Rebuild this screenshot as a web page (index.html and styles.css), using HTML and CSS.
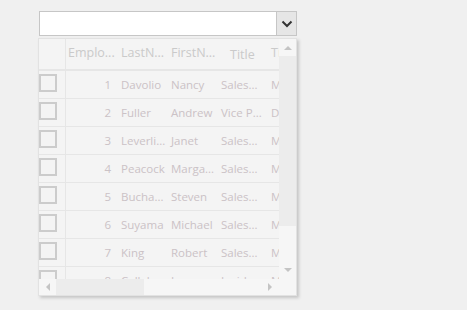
FILE: index.html
```html
<!DOCTYPE html>
<html lang="en">
<head>
    <meta charset="UTF-8">
    <title>Employees</title>
    <link rel="stylesheet" href="styles.css">
</head>
<body>
    <div class="combo">
        <div class="combo-text"></div>
        <div class="combo-button">
            <svg width="12" height="8" viewBox="0 0 12 8"><path d="M1.5 1.5 L6 6 L10.5 1.5" fill="none" stroke="#333" stroke-width="2"/></svg>
        </div>
    </div>

    <div class="popup">
        <div class="viewport">
            <div class="grid-row header">
                <div class="cell check"></div>
                <div class="cell num">Emplo...</div>
                <div class="cell">LastN...</div>
                <div class="cell">FirstN...</div>
                <div class="cell title-head">Title</div>
                <div class="cell">Ti</div>
            </div>
            <div class="grid-row"><div class="cell check"><span class="box"></span></div><div class="cell num">1</div><div class="cell">Davolio</div><div class="cell">Nancy</div><div class="cell">Sales...</div><div class="cell">Ms.</div></div>
            <div class="grid-row"><div class="cell check"><span class="box"></span></div><div class="cell num">2</div><div class="cell">Fuller</div><div class="cell">Andrew</div><div class="cell">Vice P...</div><div class="cell">Dr.</div></div>
            <div class="grid-row"><div class="cell check"><span class="box"></span></div><div class="cell num">3</div><div class="cell">Leverli...</div><div class="cell">Janet</div><div class="cell">Sales...</div><div class="cell">Ms.</div></div>
            <div class="grid-row"><div class="cell check"><span class="box"></span></div><div class="cell num">4</div><div class="cell">Peacock</div><div class="cell">Marga...</div><div class="cell">Sales...</div><div class="cell">Mrs.</div></div>
            <div class="grid-row"><div class="cell check"><span class="box"></span></div><div class="cell num">5</div><div class="cell">Bucha...</div><div class="cell">Steven</div><div class="cell">Sales...</div><div class="cell">Mr.</div></div>
            <div class="grid-row"><div class="cell check"><span class="box"></span></div><div class="cell num">6</div><div class="cell">Suyama</div><div class="cell">Michael</div><div class="cell">Sales...</div><div class="cell">Mr.</div></div>
            <div class="grid-row"><div class="cell check"><span class="box"></span></div><div class="cell num">7</div><div class="cell">King</div><div class="cell">Robert</div><div class="cell">Sales...</div><div class="cell">Mr.</div></div>
            <div class="grid-row"><div class="cell check"><span class="box"></span></div><div class="cell num">8</div><div class="cell">Callah...</div><div class="cell">Laura</div><div class="cell">Inside...</div><div class="cell">Ms.</div></div>
        </div>

        <div class="vscroll">
            <div class="arrow up"></div>
            <div class="vthumb"></div>
            <div class="vtrack"></div>
            <div class="arrow down"></div>
        </div>

        <div class="hscroll">
            <div class="arrow left"></div>
            <div class="hthumb"></div>
            <div class="htrack"></div>
            <div class="arrow right"></div>
        </div>

        <div class="corner"></div>
    </div>
</body>
</html>
```

FILE: styles.css
```css
body {
    margin: 0;
    padding: 11px 0 0 39px;
    background-color: #f0f0f0;
    font-family: "Open Sans", "Noto Sans", sans-serif;
    height: 310px;
    box-sizing: border-box;
}

.combo {
    display: flex;
    width: 258px;
    height: 25px;
    box-sizing: border-box;
    border: 1px solid #c6c6c6;
    background-color: #ffffff;
}

.combo-text {
    flex: 1;
}

.combo-button {
    width: 19px;
    border-left: 1px solid #c6c6c6;
    background-color: #e6e6e6;
    display: flex;
    align-items: center;
    justify-content: center;
}

.popup {
    margin: 2px 0 0 -1px;
    width: 259px;
    height: 258px;
    box-sizing: border-box;
    border: 1px solid #e2e2e2;
    background-color: #f4f4f4;
    box-shadow: 2px 2px 3px rgba(0, 0, 0, 0.18);
    display: grid;
    grid-template-columns: 240px 17px;
    grid-template-rows: 240px 16px;
    overflow: hidden;
}

.viewport {
    overflow: hidden;
}

.grid-row {
    display: flex;
    height: 28px;
    border-bottom: 1px solid #e6e6e6;
    box-sizing: border-box;
    font-size: 11.5px;
    color: #cbc2c6;
}

.grid-row.header {
    height: 32px;
    font-size: 12.5px;
    color: #cacaca;
    border-bottom: 2px solid #e6e6e6;
}

.cell {
    flex: 0 0 50px;
    display: flex;
    align-items: center;
    padding-left: 3px;
    box-sizing: border-box;
    white-space: nowrap;
    overflow: hidden;
}

.header .cell {
    padding-bottom: 3px;
}

.header .title-head {
    padding-left: 12px;
    padding-bottom: 0;
}

.cell.check {
    flex: 0 0 27px;
    padding-left: 0;
    align-items: flex-start;
    border-right: 1px solid #e6e6e6;
}

.cell.num {
    flex: 0 0 52px;
    justify-content: flex-end;
    padding-right: 7px;
}

.header .cell.num {
    justify-content: flex-start;
    padding-left: 2px;
}

.box {
    display: block;
    width: 18px;
    height: 18px;
    margin-top: 3px;
    box-sizing: border-box;
    border: 2px solid #cccccc;
}

.vscroll {
    display: flex;
    flex-direction: column;
    background-color: #f6f6f6;
}

.vthumb {
    height: 170px;
    background-color: #ececec;
}

.vtrack {
    flex: 1;
}

.hscroll {
    display: flex;
    background-color: #f6f6f6;
}

.hthumb {
    width: 88px;
    background-color: #ececec;
}

.htrack {
    flex: 1;
}

.corner {
    background-color: #f6f6f6;
}

.arrow {
    flex: 0 0 17px;
    position: relative;
}

.arrow::after {
    content: "";
    position: absolute;
    width: 0;
    height: 0;
    border: 4px solid transparent;
}

.arrow.up::after {
    left: 5px;
    top: 3px;
    border-bottom: 4px solid #c4c4c4;
}

.arrow.down::after {
    left: 5px;
    top: 6px;
    border-top: 4px solid #c4c4c4;
}

.arrow.left::after {
    left: 3px;
    top: 4px;
    border-right: 4px solid #c4c4c4;
}

.arrow.right::after {
    left: 6px;
    top: 4px;
    border-left: 4px solid #c4c4c4;
}
```
